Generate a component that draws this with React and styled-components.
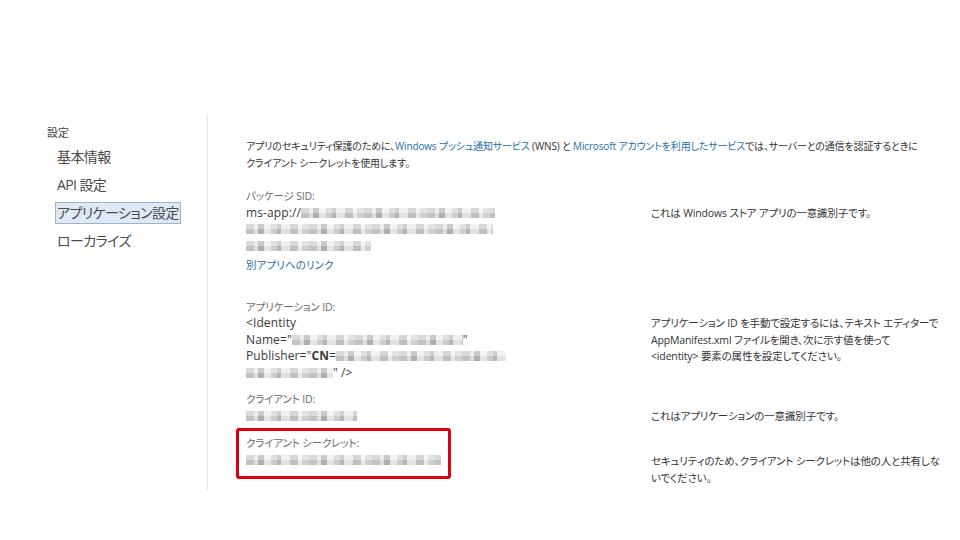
import styled, { createGlobalStyle } from 'styled-components'

const GlobalStyle = createGlobalStyle`
  body {
    margin: 0;
    background: #ffffff;
    font-family: "Open Sans", "Noto Sans CJK JP", sans-serif;
    font-feature-settings: "palt";
  }
`

const Page = styled.div`
  width: 960px;
  height: 540px;
  padding-top: 115px;
  box-sizing: border-box;
  display: flex;
`

const Sidebar = styled.nav`
  width: 208px;
  height: 375px;
  box-sizing: border-box;
  padding: 10px 0 0 47px;
  border-right: 1px solid #e4e4e4;
`

const SideTitle = styled.div`
  font-size: 11px;
  line-height: 16px;
  color: #444;
`

const NavList = styled.ul`
  list-style: none;
  margin: 5px 0 0 0;
  padding: 0;
`

const NavItem = styled.li`
  font-size: 14px;
  line-height: 20px;
  height: 28px;
  color: #4a4a4a;
  letter-spacing: -0.6px;
  & span {
    display: inline-block;
    padding: 0 1px;
    margin-left: 8px;
    background: ${({ active }) => (active ? '#dfe9f6' : 'transparent')};
    border: 1px solid ${({ active }) => (active ? '#9fb2cc' : 'transparent')};
  }
`

const Main = styled.main`
  flex: 1;
  padding: 23px 0 0 38px;
  font-size: 10px;
  line-height: 16.5px;
  color: #333;
  letter-spacing: -0.15px;
`

const Intro = styled.p`
  margin: 0 0 17px 0;
  white-space: nowrap;
`

const Link = styled.a`
  color: #1f6fa8;
  text-decoration: none;
`

const Section = styled.section`
  display: grid;
  grid-template-columns: 405px 1fr;
  margin-top: ${({ gap }) => gap}px;
`

const Left = styled.div`
  display: flex;
  flex-direction: column;
`

const Right = styled.div`
  padding-top: ${({ offset }) => offset}px;
  white-space: nowrap;
  font-size: 10.5px;
  color: #333;
`

const Label = styled.div`
  color: #6a6a6a;
  font-size: 10.5px;
`

const Line = styled.div`
  display: flex;
  align-items: center;
  height: 16.5px;
  white-space: nowrap;
  font-size: ${({ small }) => (small ? 10.5 : 12)}px;
  letter-spacing: 0.1px;
  color: #3a3a3a;
`

const Blur = styled.span`
  display: inline-block;
  width: ${({ w }) => w}px;
  height: 10px;
  background:
    linear-gradient(180deg, rgba(255, 255, 255, 0.3) 0 50%, rgba(0, 0, 0, 0.04) 50% 100%),
    repeating-linear-gradient(90deg,
      #c4c4c4 0 8px, #e4e4e4 8px 12px, #adadad 12px 18px, #ececec 18px 25px,
      #cfcfcf 25px 31px, #b5b5b5 31px 35px, #e8e8e8 35px 44px, #c0c0c0 44px 52px,
      #f0f0f0 52px 56px, #d4d4d4 56px 63px);
  filter: blur(0.7px);
  opacity: 0.9;
`

const SecretBox = styled.div`
  margin: 0 0 0 -10px;
  width: 215px;
  height: 51px;
  box-sizing: border-box;
  border: 3px solid #e0000b;
  border-radius: 3px;
  padding: 4px 0 0 7px;
`

const Strong = styled.b`
  font-weight: 700;
`

const App = () => {
  return (
    <>
      <GlobalStyle />
      <Page>
        <Sidebar>
          <SideTitle>設定</SideTitle>
          <NavList>
            <NavItem><span>基本情報</span></NavItem>
            <NavItem><span>API 設定</span></NavItem>
            <NavItem active><span>アプリケーション設定</span></NavItem>
            <NavItem><span>ローカライズ</span></NavItem>
          </NavList>
        </Sidebar>
        <Main>
          <Intro>
            アプリのセキュリティ保護のために、<Link>Windows プッシュ通知サービス</Link> (WNS) と{' '}
            <Link>Microsoft アカウントを利用したサービス</Link>では、サーバーとの通信を認証するときに
            <br />
            クライアント シークレットを使用します。
          </Intro>

          <Section gap={0}>
            <Left>
              <Label>パッケージ SID:</Label>
              <Line>ms-app://<Blur w={194} /></Line>
              <Line><Blur w={247} /></Line>
              <Line><Blur w={125} /></Line>
              <Line small style={{ marginTop: 3 }}><Link>別アプリへのリンク</Link></Line>
            </Left>
            <Right offset={16.5}>これは Windows ストア アプリの一意識別子です。</Right>
          </Section>

          <Section gap={25}>
            <Left>
              <Label>アプリケーション ID:</Label>
              <Line>&lt;Identity</Line>
              <Line>Name="<Blur w={171} />"</Line>
              <Line>Publisher="<Strong>CN</Strong>=<Blur w={170} /></Line>
              <Line><Blur w={87} />" /&gt;</Line>
            </Left>
            <Right offset={16.5}>
              アプリケーション ID を手動で設定するには、テキスト エディターで
              <br />
              AppManifest.xml ファイルを開き、次に示す値を使って
              <br />
              &lt;identity&gt; 要素の属性を設定してください。
            </Right>
          </Section>

          <Section gap={10}>
            <Left>
              <Label>クライアント ID:</Label>
              <Line><Blur w={111} /></Line>
            </Left>
            <Right offset={16.5}>これはアプリケーションの一意識別子です。</Right>
          </Section>

          <Section gap={4}>
            <Left>
              <SecretBox>
                <Label>クライアント シークレット:</Label>
                <Line><Blur w={195} /></Line>
              </SecretBox>
            </Left>
            <Right offset={25}>
              セキュリティのため、クライアント シークレットは他の人と共有しな
              <br />
              いでください。
            </Right>
          </Section>
        </Main>
      </Page>
    </>
  )
}

export default App
